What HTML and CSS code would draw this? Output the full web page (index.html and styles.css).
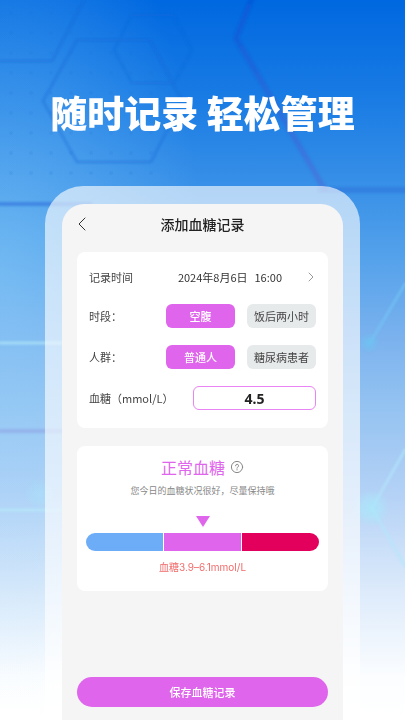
FILE: index.html
```html
<!DOCTYPE html>
<html lang="zh-CN">
<head>
<meta charset="utf-8">
<meta name="viewport" content="width=device-width, initial-scale=1">
<title>添加血糖记录</title>
<link rel="stylesheet" href="styles.css">
</head>
<body>
<svg class="backdrop" viewBox="0 0 405 720" preserveAspectRatio="xMidYMid slice" aria-hidden="true">
  <defs>
    <pattern id="dots" width="20" height="20" patternUnits="userSpaceOnUse">
      <circle cx="11" cy="13" r="2" fill="#1668d0" opacity=".13"/>
    </pattern>
    <radialGradient id="glow">
      <stop offset="0" stop-color="#a9e8fb" stop-opacity=".8"/>
      <stop offset=".5" stop-color="#a9e8fb" stop-opacity=".5"/>
      <stop offset="1" stop-color="#a9e8fb" stop-opacity="0"/>
    </radialGradient>
    <radialGradient id="glow-blue">
      <stop offset="0" stop-color="#6cc4f3" stop-opacity=".8"/>
      <stop offset="1" stop-color="#6cc4f3" stop-opacity="0"/>
    </radialGradient>
    <linearGradient id="edge" x1="0" y1="0" x2="0" y2="1">
      <stop offset="0" stop-color="#0a52d4"/>
      <stop offset="1" stop-color="#4c70da"/>
    </linearGradient>
    <filter id="soft"><feGaussianBlur stdDeviation="1"/></filter>
  </defs>
  <rect width="170" height="190" fill="url(#dots)"/>
  <g fill="none" filter="url(#soft)">
    <g stroke="#1767d3" stroke-width="2" opacity=".45">
      <path d="M84 0 52 61H0"/>
      <path d="M77 40h73l32 61-31 61H77L43 101z"/>
      <path d="M132 15h41l19 35-18 33h-42l-18-33z" opacity=".7"/>
    </g>
    <path d="M0 204h90" stroke="#2f6fdc" stroke-width="4" opacity=".6"/>
    <path d="M252-2 236 38 325 190" stroke="url(#edge)" stroke-width="6" opacity=".55"/>
    <path d="M320 190H405" stroke="#286fd9" stroke-width="6" opacity=".5"/>
    <path d="M0 431h62" stroke="#8fa5e6" stroke-width="4" opacity=".6"/>
    <path d="M0 343h62M0 510h62" stroke="#b8ecfc" stroke-width="3" opacity=".6"/>
    <path d="M405 284 370 343" stroke="#75c6f6" stroke-width="3" opacity=".6"/>
    <path d="M405 450 372 508 405 566" stroke="#b3e8fb" stroke-width="3" opacity=".6"/>
  </g>
  <circle cx="369" cy="343" r="11" fill="url(#glow-blue)"/>
  <circle cx="371" cy="508" r="19" fill="url(#glow)"/>
  <circle cx="40" cy="494" r="16" fill="url(#glow)" opacity=".5"/>
</svg>
<main class="page">
  <h1 class="headline">随时记录 轻松管理</h1>
  <div class="frame">
    <form class="screen">
      <header class="topbar">
        <button class="back" type="button" aria-label="返回">
          <svg viewBox="0 0 8 14"><path d="M7 1 1 7l6 6"/></svg>
        </button>
        <h2 class="title">添加血糖记录</h2>
      </header>
      <section class="card entry">
        <div class="row when">
          <span class="label" id="time-label">记录时间</span>
          <button class="datetime" type="button" aria-labelledby="time-label time-value">
            <span class="stamp" id="time-value"><span>2024年8月6日</span><span>16:00</span></span>
            <svg viewBox="0 0 6 10"><path d="m1 1 4 4-4 4"/></svg>
          </button>
        </div>
        <div class="row">
          <span class="label">时段：</span>
          <div class="options">
            <button class="option selected" type="button" aria-pressed="true">空腹</button>
            <button class="option" type="button" aria-pressed="false">饭后两小时</button>
          </div>
        </div>
        <div class="row">
          <span class="label">人群：</span>
          <div class="options">
            <button class="option selected" type="button" aria-pressed="true">普通人</button>
            <button class="option" type="button" aria-pressed="false">糖尿病患者</button>
          </div>
        </div>
        <div class="row">
          <label class="label" for="glucose">血糖（mmol/L）</label>
          <input class="value" id="glucose" type="text" inputmode="decimal" value="4.5">
        </div>
      </section>
      <section class="card result">
        <div class="status">
          <h3 class="verdict">正常血糖</h3>
          <button class="help" type="button" aria-label="说明">
            <svg viewBox="0 0 14 14"><circle cx="7" cy="7" r="5.6"/><path d="M5.6 5.8a1.5 1.5 0 1 1 2.2 1.3c-.6.3-.8.5-.8 1.1M7 9.6v.4"/></svg>
          </button>
        </div>
        <p class="advice">您今日的血糖状况很好，尽量保持哦</p>
        <svg class="pointer" viewBox="0 0 14 11" aria-hidden="true"><path d="M0 0h14L7 11z"/></svg>
        <div class="scale"><span class="low"></span><span class="normal"></span><span class="high"></span></div>
        <p class="range">血糖3.9–6.1mmol/L</p>
      </section>
      <button class="save" type="submit">保存血糖记录</button>
    </form>
  </div>
</main>
</body>
</html>
```
FILE: styles.css
```css
* {
  box-sizing: border-box;
}

body {
  margin: 0;
  font-family: "Noto Sans CJK SC", sans-serif;
  color: #444;
}

h1, h2, h3, p {
  margin: 0;
}

button, input {
  font: inherit;
  color: inherit;
  border: 0;
  padding: 0;
  background: none;
}

svg {
  display: block;
  fill: none;
  stroke-linecap: round;
  stroke-linejoin: round;
}

.page {
  min-height: 100vh;
  display: flex;
  flex-direction: column;
}

.backdrop {
  position: absolute;
  z-index: -1;
  width: 100%;
  height: 100%;
  background:
    radial-gradient(ellipse 50% 60% at 0 38%, rgb(150 215 252 / 42%), transparent),
    linear-gradient(to bottom, #0068e0, #1a7ce4 14%, #3e94e8 28%, #55a2eb 36%, #7bb2ee 47%, #93c2f1 56%, #b5d2f6 69%, #dfecfb 83%, #fbfdff 94%, #fff);
}

.headline {
  padding: 84px 0 46px;
  font-size: 37px;
  line-height: 56px;
  font-weight: 900;
  text-align: center;
  color: #fff;
}

.frame {
  flex: 1;
  display: flex;
  margin: 0 45px;
  padding: 18px 17px 0;
  border-radius: 38px 38px 0 0;
  background: rgb(255 255 255 / 62%);
}

.screen {
  flex: 1;
  display: flex;
  flex-direction: column;
  padding: 0 15px 13px;
  border-radius: 22px 22px 0 0;
  background: #f5f5f5;
}

.topbar {
  display: grid;
  grid-template-columns: 16px 1fr 16px;
  align-items: center;
  height: 40px;
  margin-bottom: 8px;
}

.back svg {
  width: 8px;
  height: 14px;
  margin-left: 1px;
  stroke: #333;
}

.title {
  font-size: 14px;
  line-height: 20px;
  font-weight: 500;
  text-align: center;
  color: #222;
}

.card {
  border-radius: 8px;
  background: #fff;
}

.entry {
  display: grid;
  gap: 17px;
  padding: 15px 12px 18px;
  font-size: 11px;
}

.row {
  display: flex;
  align-items: center;
  justify-content: space-between;
  height: 24px;
}

.when {
  height: 20px;
}

.datetime {
  display: flex;
  align-items: center;
  gap: 26px;
  padding-right: 2px;
  color: #333;
}

.datetime svg {
  width: 6px;
  height: 10px;
  stroke: #999;
}

.stamp {
  display: flex;
  gap: 7px;
}

.options {
  display: grid;
  grid-template-columns: 69px 69px;
  gap: 12px;
}

.option {
  height: 24px;
  border-radius: 6px;
  background: #e7eaeb;
}

.selected {
  font-weight: 500;
  color: #fff;
  background: #df66ec;
}

.value {
  width: 123px;
  height: 24px;
  border: 1px solid #ea83f3;
  border-radius: 6px;
  background: #fff;
  font-family: "Noto Sans", sans-serif;
  font-size: 14px;
  font-weight: 700;
  text-align: center;
  color: #222;
}

.result {
  display: flex;
  flex-direction: column;
  align-items: center;
  margin-top: 18px;
  padding: 9px 9px 16px;
}

.status {
  display: flex;
  align-items: center;
  gap: 5px;
}

.verdict {
  font-size: 16px;
  line-height: 24px;
  font-weight: 400;
  color: #df66ec;
}

.help svg {
  width: 14px;
  height: 14px;
  stroke: #888;
}

.advice {
  margin-top: 4px;
  font-size: 9px;
  line-height: 16px;
  color: #888;
}

.pointer {
  width: 14px;
  height: 11px;
  margin-top: 17px;
  fill: #df66ec;
}

.scale {
  display: grid;
  grid-template-columns: repeat(3, 1fr);
  gap: 1px;
  width: 100%;
  height: 18px;
  margin-top: 6px;
  border-radius: 9px;
  overflow: hidden;
}

.low {
  background: #6dadf8;
}

.normal {
  background: #df66ec;
}

.high {
  background: #e3005c;
}

.range {
  margin-top: 8px;
  font-family: Inter, "Noto Sans CJK SC", sans-serif;
  font-size: 10px;
  line-height: 16px;
  color: #f26b6b;
}

.save {
  height: 30px;
  margin-top: auto;
  border-radius: 15px;
  background: #df66ec;
  font-size: 11px;
  font-weight: 500;
  color: #fff;
}
```
